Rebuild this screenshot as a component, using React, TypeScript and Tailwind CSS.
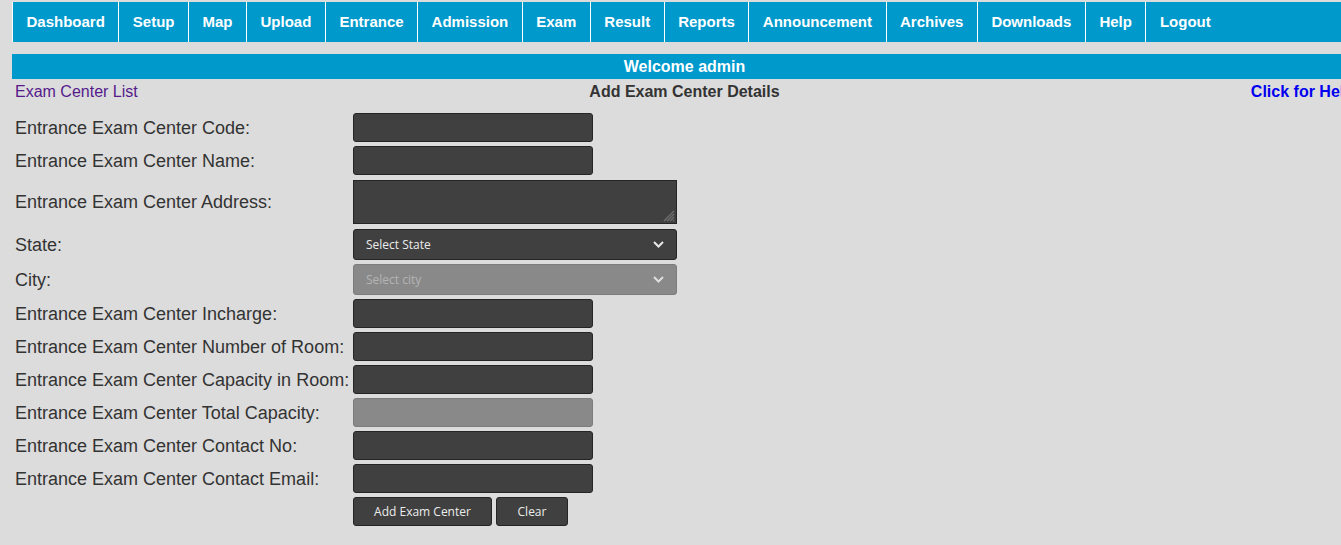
import React from "react";

const navItems = [
  "Dashboard",
  "Setup",
  "Map",
  "Upload",
  "Entrance",
  "Admission",
  "Exam",
  "Result",
  "Reports",
  "Announcement",
  "Archives",
  "Downloads",
  "Help",
  "Logout",
];

function Chevron({ color }: { color: string }) {
  return (
    <svg width="11" height="7" viewBox="0 0 11 7" className="shrink-0">
      <path d="M1 1 L5.5 5.5 L10 1" fill="none" stroke={color} strokeWidth="2" />
    </svg>
  );
}

function TextBox({ disabled }: { disabled?: boolean }) {
  return (
    <div
      className={
        disabled
          ? "w-[240px] h-[29px] rounded-[3px] border border-[#7c7c7c] bg-[#898989]"
          : "w-[240px] h-[29px] rounded-[3px] border border-[#252525] bg-[#404040]"
      }
    />
  );
}

type Row = {
  label: string;
  kind: "input" | "disabled" | "textarea" | "state" | "city";
};

const rows: Row[] = [
  { label: "Entrance Exam Center Code:", kind: "input" },
  { label: "Entrance Exam Center Name:", kind: "input" },
  { label: "Entrance Exam Center Address:", kind: "textarea" },
  { label: "State:", kind: "state" },
  { label: "City:", kind: "city" },
  { label: "Entrance Exam Center Incharge:", kind: "input" },
  { label: "Entrance Exam Center Number of Room:", kind: "input" },
  { label: "Entrance Exam Center Capacity in Room:", kind: "input" },
  { label: "Entrance Exam Center Total Capacity:", kind: "disabled" },
  { label: "Entrance Exam Center Contact No:", kind: "input" },
  { label: "Entrance Exam Center Contact Email:", kind: "input" },
];

function Field({ kind }: { kind: Row["kind"] }) {
  if (kind === "input") return <TextBox />;
  if (kind === "disabled") return <TextBox disabled />;
  if (kind === "textarea")
    return (
      <div className="relative w-[324px] h-[44px] border border-[#252525] bg-[#404040]">
        <svg
          width="13"
          height="13"
          viewBox="0 0 13 13"
          className="absolute right-[1px] bottom-[1px]"
        >
          <path d="M12 2 L2 12" stroke="#6e6e6e" strokeWidth="1.2" />
          <path d="M12 5 L5 12" stroke="#6e6e6e" strokeWidth="1.2" />
          <path d="M12 8 L8 12" stroke="#6e6e6e" strokeWidth="1.2" />
          <path d="M12 11 L11 12" stroke="#6e6e6e" strokeWidth="1.2" />
        </svg>
      </div>
    );
  if (kind === "state")
    return (
      <div className="w-[324px] h-[31px] rounded-[3px] border border-[#252525] bg-[#404040] flex items-center justify-between pl-[12px] pr-[12px] text-[12px] text-[#ececec] font-['Open_Sans',sans-serif]">
        <span>Select State</span>
        <Chevron color="#e8e8e8" />
      </div>
    );
  return (
    <div className="w-[324px] h-[31px] rounded-[3px] border border-[#7c7c7c] bg-[#898989] flex items-center justify-between pl-[12px] pr-[12px] text-[12px] text-[#b4b4b4] font-['Open_Sans',sans-serif]">
      <span>Select city</span>
      <Chevron color="#dedede" />
    </div>
  );
}

function rowMargin(i: number) {
  if (i === 0) return "";
  if (i === 2 || i === 3) return "mt-[5px]";
  return "mt-[4px]";
}

export default function App() {
  return (
    <div className="w-[1341px] h-[545px] overflow-hidden bg-[#dcdcdc] font-['Liberation_Sans',Arial,sans-serif]">
      <div className="ml-[12px] w-[1345px]">
        {/* Nav */}
        <div className="mt-[2px] h-[40px] flex bg-[#0099cc]">
          {navItems.map((item) => (
            <div
              key={item}
              className="h-full flex items-center border-l border-white px-[13.5px] pt-[1px] text-[15px] font-bold text-white"
            >
              {item}
            </div>
          ))}
        </div>

        {/* Welcome */}
        <div className="mt-[12px] h-[25px] bg-[#0099cc] flex items-center justify-center text-[16px] font-bold text-white">
          Welcome admin
        </div>

        {/* Sub header */}
        <div className="h-[24px] pt-[1px] grid grid-cols-3 items-center px-[3px] text-[16px]">
          <div className="text-[#551a8b]">Exam Center List</div>
          <div className="text-center font-bold text-[#333333]">Add Exam Center Details</div>
          <div className="text-right font-bold text-[#0000ee] whitespace-nowrap">Click for Help</div>
        </div>

        {/* Form */}
        <div className="mt-[10px] pl-[3px] flex flex-col">
          {rows.map((r, i) => (
            <div key={r.label} className={"flex items-center " + rowMargin(i)}>
              <div className="w-[338px] pt-[1px] text-[18px] text-[#333333] whitespace-nowrap">{r.label}</div>
              <Field kind={r.kind} />
            </div>
          ))}
          <div className="flex items-center mt-[4px]">
            <div className="w-[338px]" />
            <div className="flex gap-[4px] font-['Open_Sans',sans-serif] text-[12px] text-[#ececec]">
              <div className="w-[139px] h-[29px] rounded-[3px] border border-[#252525] bg-[#404040] flex items-center justify-center">
                Add Exam Center
              </div>
              <div className="w-[72px] h-[29px] rounded-[3px] border border-[#252525] bg-[#404040] flex items-center justify-center">
                Clear
              </div>
            </div>
          </div>
        </div>
      </div>
    </div>
  );
}
